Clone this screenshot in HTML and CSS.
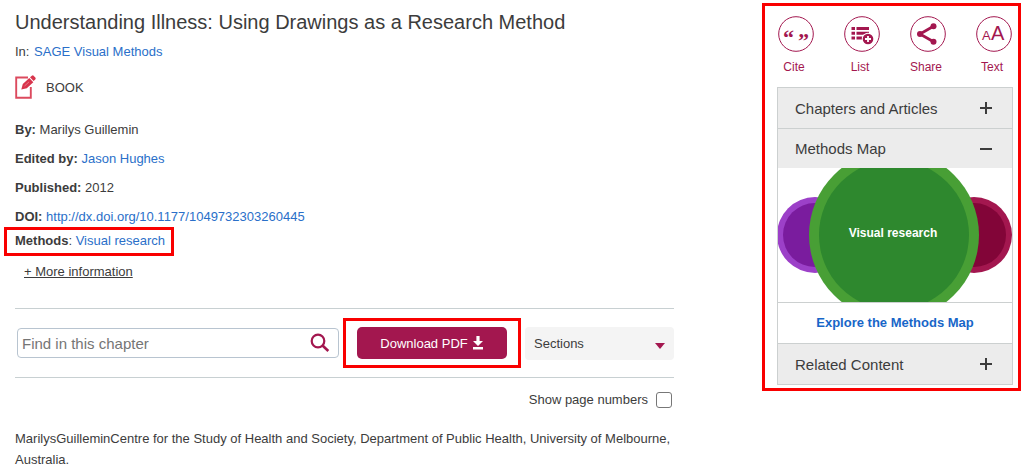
FILE: index.html
```html
<!DOCTYPE html>
<html lang="en">
<head>
    <meta charset="UTF-8">
    <meta name="viewport" content="width=device-width, initial-scale=1.0">
    <title>Understanding Illness: Using Drawings as a Research Method</title>
    <link rel="stylesheet" href="styles.css">
</head>
<body>
    <div class="page">
        <main class="content">
            <h1>Understanding Illness: Using Drawings as a Research Method</h1>
            <p class="source">In: <a href="#">SAGE Visual Methods</a></p>

            <div class="content-type">
                <svg class="book-icon" viewBox="0 0 21 24" aria-hidden="true">
                    <path d="M13 2.5H1.2v20.3h14.6V12" fill="none" stroke="#dc4a5e" stroke-width="1.9"/>
                    <path d="M6.3 14.5l1.5-5.6 6.5-6 4 4.4-6.5 5.9z" fill="#d8344c"/>
                    <path d="M15 2.3l1.9-1.6q1-.8 1.9.2l1.5 1.7q.8 1-.1 1.9l-1.6 1.6z" fill="#d8344c"/>
                    <path d="M9.5 11l4.5-4.1" stroke="#f0a4b0" stroke-width=".6"/>
                </svg>
                <span>BOOK</span>
            </div>

            <div class="details">
                <p><b>By:</b> Marilys Guillemin</p>
                <p><b>Edited by:</b> <a href="#">Jason Hughes</a></p>
                <p><b>Published:</b> 2012</p>
                <p><b>DOI:</b> <a href="#">http://dx.doi.org/10.1177/1049732303260445</a></p>
            </div>
            <p class="methods highlight"><b>Methods</b>: <a href="#">Visual research</a></p>
            <a href="#" class="more-info">+ More information</a>

            <div class="toolbar">
                <form class="search">
                    <input type="text" placeholder="Find in this chapter" aria-label="Find in this chapter">
                    <button type="button" aria-label="Search">
                        <svg viewBox="0 0 20 20" aria-hidden="true">
                            <circle cx="8" cy="8" r="6.3" fill="none" stroke="#a3174f" stroke-width="2.2"/>
                            <path d="M12.5 12.5L18.3 18" stroke="#a3174f" stroke-width="2.6"/>
                        </svg>
                    </button>
                </form>
                <div class="download highlight">
                    <button type="button">
                        Download PDF
                        <svg viewBox="0 0 12 14" aria-hidden="true">
                            <path d="M4.4 0h3.2v5H11L6 10 1 5h3.4zM1 11h10v2.5H1z" fill="#fff"/>
                        </svg>
                    </button>
                </div>
                <div class="sections">
                    <select aria-label="Sections">
                        <option>Sections</option>
                    </select>
                    <span class="arrow"></span>
                </div>
            </div>

            <div class="page-numbers">
                <label for="show-pages">Show page numbers</label>
                <input type="checkbox" id="show-pages">
            </div>

            <p class="affiliation">MarilysGuilleminCentre for the Study of Health and Society, Department of Public Health, University of Melbourne, Australia.</p>
        </main>

        <aside class="sidebar highlight">
            <div class="tools">
                <button type="button">
                    <svg viewBox="0 0 36 36" aria-hidden="true">
                        <circle class="ring" cx="18" cy="18" r="17.3"/>
                        <text class="quote" x="5" y="29">“</text>
                        <text class="quote" x="20" y="32">”</text>
                    </svg>
                    <span>Cite</span>
                </button>
                <button type="button">
                    <svg viewBox="0 0 36 36" aria-hidden="true">
                        <circle class="ring" cx="18" cy="18" r="17.3"/>
                        <path d="M7.5 11H11v3H7.5zM12.5 11H25v3H12.5zM7.5 15.8H11v3H7.5zM12.5 15.8H25v3H12.5zM7.5 20.6H11v3H7.5zM12.5 20.6H19v3H12.5z" fill="#a3174f"/>
                        <circle cx="24" cy="23" r="6.2" fill="#fff"/>
                        <circle cx="24" cy="23" r="5.3" fill="#a3174f"/>
                        <path d="M21 23h6M24 20v6" stroke="#fff" stroke-width="1.8"/>
                    </svg>
                    <span>List</span>
                </button>
                <button type="button">
                    <svg viewBox="0 0 36 36" aria-hidden="true">
                        <circle class="ring" cx="18" cy="18" r="17.3"/>
                        <path d="M23.5 10.3L10 18l13.5 7.7" fill="none" stroke="#a3174f" stroke-width="2.8"/>
                        <g fill="#a3174f">
                            <circle cx="23.5" cy="10.3" r="3"/>
                            <circle cx="10" cy="18" r="3"/>
                            <circle cx="23.5" cy="25.7" r="3"/>
                        </g>
                    </svg>
                    <span>Share</span>
                </button>
                <button type="button">
                    <svg viewBox="0 0 36 36" aria-hidden="true">
                        <circle class="ring" cx="18" cy="18" r="17.3"/>
                        <text class="small-a" x="6" y="24">A</text>
                        <text class="big-a" x="15" y="24">A</text>
                    </svg>
                    <span>Text</span>
                </button>
            </div>

            <div class="panels">
                <button type="button" class="panel-title" aria-expanded="false">
                    Chapters and Articles
                    <svg viewBox="0 0 12 12" aria-hidden="true"><path d="M0 6h12M6 0v12"/></svg>
                </button>
                <button type="button" class="panel-title" aria-expanded="true">
                    Methods Map
                    <svg viewBox="0 0 12 12" aria-hidden="true"><path d="M0 6h12"/></svg>
                </button>
                <svg class="map" viewBox="0 0 234 134" role="img" aria-label="Visual research">
                    <circle cx="37" cy="67" r="38" fill="#9c40c8"/>
                    <circle cx="37" cy="67" r="32" fill="#7a1c9e"/>
                    <circle cx="196" cy="67" r="38" fill="#a3174f"/>
                    <circle cx="196" cy="67" r="32" fill="#820538"/>
                    <circle cx="116" cy="67" r="85" fill="#489f35"/>
                    <circle cx="116" cy="67" r="75" fill="#2e882e"/>
                    <text x="115" y="69" text-anchor="middle">Visual research</text>
                </svg>
                <a href="#" class="explore">Explore the Methods Map</a>
                <button type="button" class="panel-title" aria-expanded="false">
                    Related Content
                    <svg viewBox="0 0 12 12" aria-hidden="true"><path d="M0 6h12M6 0v12"/></svg>
                </button>
            </div>
        </aside>
    </div>
</body>
</html>
```

FILE: styles.css
```css
* {
    box-sizing: border-box;
}

body {
    margin: 0;
    font-family: "Liberation Sans", Arial, sans-serif;
    font-size: 13px;
    line-height: 21px;
    color: #3c3c3c;
    background-color: #fff;
}

h1, p {
    margin: 0;
}

a {
    color: #2a6fc9;
    text-decoration: none;
}

button, input, select {
    font-family: inherit;
    font-size: inherit;
    color: inherit;
}

button {
    padding: 0;
    border: none;
    background: none;
    cursor: pointer;
}

.page {
    display: flex;
    align-items: flex-start;
    gap: 88px;
    padding: 3px 3px 0 15px;
}

.content {
    flex: 1;
    min-width: 0;
}

.highlight {
    border: 3px solid #f90000;
}

h1 {
    padding-top: 6px;
    font-size: 20px;
    font-weight: normal;
    line-height: 26px;
}

.source {
    margin-top: 6px;
}

.source a {
    margin-left: 1px;
}

.content-type {
    display: flex;
    align-items: center;
    gap: 10px;
    margin: 13px 0 20px;
}

.book-icon {
    width: 21px;
    height: 24px;
}

/* details */
.details p {
    margin-bottom: 8px;
}

.details p:last-child {
    margin-bottom: 0;
}

.methods {
    width: fit-content;
    margin-left: -11px;
    padding: 0 6px 2px 8px;
}

.more-info {
    display: inline-block;
    margin: 5px 0 26px 9px;
    color: #3c3c3c;
    text-decoration: underline;
}

/* toolbar */
.toolbar {
    display: flex;
    align-items: center;
    gap: 4px;
    padding: 9px 0 9px 2px;
    border-top: 1px solid #c8d0d2;
    border-bottom: 1px solid #c8d0d2;
}

.search {
    display: flex;
    align-items: center;
    flex: 1;
    height: 30px;
    padding: 0 8px 0 4px;
    border: 1px solid #b8c4d0;
    border-radius: 4px;
}

.search input {
    flex: 1;
    min-width: 0;
    padding: 0;
    border: none;
    outline: none;
    font-size: 15px;
}

.search input::placeholder {
    color: #757575;
}

.search svg {
    display: block;
    width: 20px;
    height: 20px;
}

.download {
    padding: 6px 11px;
}

.download button {
    display: flex;
    align-items: center;
    justify-content: center;
    gap: 4px;
    width: 150px;
    height: 32px;
    border-radius: 5px;
    background-color: #a3174f;
    color: #fff;
}

.download svg {
    width: 12px;
    height: 14px;
}

.sections {
    position: relative;
    width: 149px;
}

.sections select {
    display: block;
    width: 100%;
    height: 33px;
    padding: 0 9px;
    border: none;
    border-radius: 4px;
    background-color: #f4f4f4;
    appearance: none;
}

.arrow {
    position: absolute;
    top: 16px;
    right: 9px;
    border: 5px solid transparent;
    border-top: 6px solid #a3174f;
    border-bottom: none;
    pointer-events: none;
}

.page-numbers {
    display: flex;
    align-items: center;
    justify-content: flex-end;
    gap: 8px;
    margin: 11px 2px 18px 0;
}

.page-numbers input {
    width: 16px;
    height: 16px;
    margin: 0;
    border: 1px solid #777;
    border-radius: 3px;
    background-color: #fff;
    appearance: none;
}

.page-numbers input:checked {
    background-color: #a3174f;
}

/* sidebar */
.sidebar {
    flex: 0 0 259px;
    padding: 10px 5px 3px 12px;
}

.tools {
    display: flex;
    justify-content: space-between;
    margin-bottom: 10px;
}

.tools button {
    display: flex;
    flex-direction: column;
    align-items: center;
    gap: 5px;
    width: 38px;
    font-size: 12px;
    line-height: 20px;
    color: #a3174f;
}

.tools span {
    padding-right: 4px;
}

.tools svg {
    width: 36px;
    height: 36px;
    overflow: visible;
}

.tools text {
    fill: #a3174f;
}

.ring {
    fill: none;
    stroke: #a3174f;
    stroke-width: 1;
}

.quote {
    font-family: "Liberation Serif", "Times New Roman", serif;
    font-size: 22px;
    font-weight: bold;
}

.small-a {
    font-size: 13px;
}

.big-a {
    font-size: 20px;
}

.panels {
    border: 1px solid #ccd0d0;
}

.panel-title {
    display: flex;
    align-items: center;
    justify-content: space-between;
    width: 100%;
    height: 40px;
    padding: 0 20px 0 17px;
    background-color: #ececec;
    font-size: 15px;
    text-align: left;
}

.panel-title + .panel-title,
.explore {
    border-top: 1px solid #ccd0d0;
}

.panel-title svg {
    width: 12px;
    height: 12px;
    stroke: #3c3c3c;
    stroke-width: 2;
}

.map {
    display: block;
    width: 100%;
}

.map text {
    fill: #fff;
    font-size: 12px;
    font-weight: bold;
}

.explore {
    display: block;
    padding: 9px 0 10px;
    border-bottom: 1px solid #ccd0d0;
    font-size: 13px;
    font-weight: bold;
    color: #1766c8;
    text-align: center;
}
```
